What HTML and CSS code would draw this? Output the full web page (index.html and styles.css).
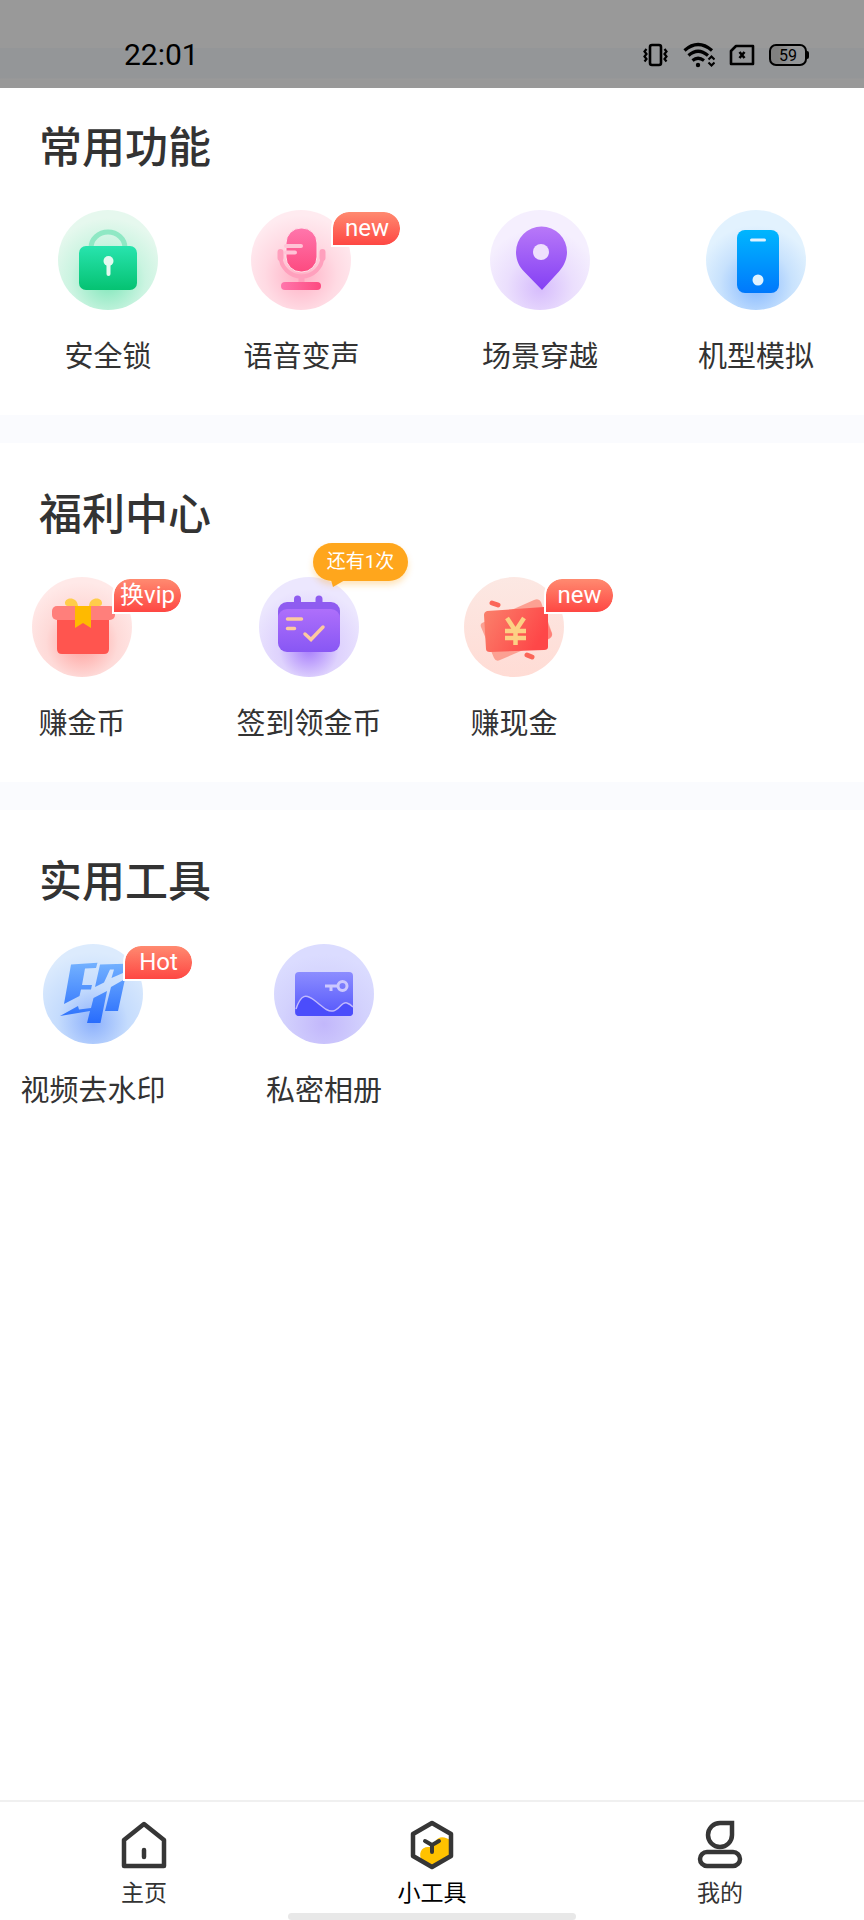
FILE: index.html
```html
<!DOCTYPE html>
<html lang="zh-CN">
<head>
  <meta charset="UTF-8" />
  <meta name="viewport" content="width=device-width, initial-scale=1.0" />
  <title>小工具</title>
  <link rel="stylesheet" href="styles.css">
</head>
<body>
  <div class="app">
    <header class="status-bar">
      <span class="time">22:01</span>
      <div class="status-icons">
        <svg width="26" height="24" viewBox="0 0 26 24" fill="none" stroke="#000" stroke-width="2.600">
          <rect x="7" y="2" width="11" height="20" rx="2" />
          <path d="M3.500 6l-2 2.500 2 2.500-2 2.500 2 2.500-2 2.500M21.500 6l2 2.500-2 2.500 2 2.500-2 2.500 2 2.500" stroke-width="2.200" />
        </svg>
        <svg width="32" height="26" viewBox="0 0 32 26" fill="none" stroke="#000" stroke-width="3.200">
          <path d="M1.500 8.500Q15 -3.500 29 8.500M5.500 13.500Q15 5 25 13.500M9.500 18.500Q15 14 21 18.500" />
          <circle cx="15" cy="23" r="2.200" fill="#000" stroke="none" />
          <path d="M25.500 17.500l3-3 3 3M25.500 20.500l3 3 3-3" stroke-width="2.200" />
        </svg>
        <svg width="26" height="22" viewBox="0 0 26 22" fill="none" stroke="#000" stroke-width="2.600">
          <path d="M7 2h17v18H2V7z" stroke-linejoin="round" />
          <path d="M10.500 8l5 6M15.500 8l-5 6" />
        </svg>
        <div class="battery">59</div>
      </div>
    </header>

    <main class="content">
      <section class="group">
        <h2>常用功能</h2>
        <div class="tools">
          <a class="tool" href="#">
            <span class="icon">
              <svg viewBox="0 0 100 100">
                <defs>
                  <radialGradient id="lockBg" cx=".5" cy=".7" r=".62"><stop offset="0" stop-color="#7ce6b8" /><stop offset=".6" stop-color="#cbf4e1" /><stop offset="1" stop-color="#e6f8ee" /></radialGradient>
                  <linearGradient id="lockFill" x2="0" y2="1"><stop stop-color="#28e4ae" /><stop offset="1" stop-color="#05c272" /></linearGradient>
                </defs>
                <circle cx="50" cy="50" r="50" fill="url(#lockBg)" />
                <path d="M33 40v-2a17 16 0 0 1 34 0v2" fill="none" stroke="#8fe8c4" stroke-width="5" />
                <rect x="21" y="36" width="58" height="44" rx="7" fill="url(#lockFill)" />
                <circle cx="50.500" cy="51" r="5" fill="#e4faf0" />
                <path d="M50.500 52v12" stroke="#e4faf0" stroke-width="4" stroke-linecap="round" />
              </svg>
            </span>
            <span class="label">安全锁</span>
          </a>
          <a class="tool room-md" href="#">
            <span class="icon">
              <svg viewBox="0 0 100 100">
                <defs>
                  <radialGradient id="micBg" cx=".5" cy=".65" r=".6"><stop offset="0" stop-color="#ffafc4" /><stop offset=".6" stop-color="#ffdae3" /><stop offset="1" stop-color="#ffebf0" /></radialGradient>
                  <linearGradient id="micFill" x2="0" y2="1"><stop stop-color="#ff76ac" /><stop offset="1" stop-color="#fd4a80" /></linearGradient>
                  <linearGradient id="micBase"><stop stop-color="#ff76ac" /><stop offset="1" stop-color="#fd4a80" /></linearGradient>
                </defs>
                <circle cx="50" cy="50" r="50" fill="url(#micBg)" />
                <path d="M29.500 46a21 20.500 0 0 0 42 0" fill="none" stroke="#ffa0bd" stroke-width="4" />
                <path d="M29.500 42v6M71.500 42v6" stroke="#ffa0bd" stroke-width="6" stroke-linecap="round" />
                <path d="M50.500 66v8" stroke="#ffa0bd" stroke-width="6" />
                <rect x="35" y="18" width="31" height="44" rx="15" fill="url(#micFill)" stroke="#ffe0e9" />
                <path d="M35 36h15M35 42.500h9" stroke="#ffc3d6" stroke-width="4" stroke-linecap="round" />
                <rect x="30" y="72" width="40" height="8" rx="4" fill="url(#micBase)" />
              </svg>
              <span class="badge">new</span>
            </span>
            <span class="label">语音变声</span>
          </a>
          <a class="tool" href="#">
            <span class="icon">
              <svg viewBox="0 0 100 100">
                <defs>
                  <radialGradient id="pinBg" cx=".5" cy=".78" r=".6"><stop offset="0" stop-color="#d6bcfc" /><stop offset=".55" stop-color="#ebdffd" /><stop offset="1" stop-color="#f5effe" /></radialGradient>
                  <linearGradient id="pinFill" x2="0" y2="1"><stop stop-color="#b878f8" /><stop offset="1" stop-color="#8440f4" /></linearGradient>
                </defs>
                <circle cx="50" cy="50" r="50" fill="url(#pinBg)" />
                <path d="M52 80L34 61.500C28.500 56 26 49 26 42a25.500 25.500 0 0 1 51 0c0 7-3 14-8 19.500z" fill="url(#pinFill)" />
                <circle cx="51" cy="42" r="8" fill="#efdffd" />
              </svg>
            </span>
            <span class="label">场景穿越</span>
          </a>
          <a class="tool" href="#">
            <span class="icon">
              <svg viewBox="0 0 100 100">
                <defs>
                  <radialGradient id="phoneBg" cx=".5" cy=".75" r=".6"><stop offset="0" stop-color="#86b8ff" /><stop offset=".6" stop-color="#c8e2fd" /><stop offset="1" stop-color="#e2f2fe" /></radialGradient>
                  <linearGradient id="phoneFill" x2="0" y2="1"><stop stop-color="#00b6fe" /><stop offset="1" stop-color="#0078fc" /></linearGradient>
                </defs>
                <circle cx="50" cy="50" r="50" fill="url(#phoneBg)" />
                <rect x="31" y="20" width="42" height="63" rx="8" fill="url(#phoneFill)" />
                <path d="M45.500 30h13" stroke="#e0f2ff" stroke-width="3" stroke-linecap="round" />
                <circle cx="52" cy="70" r="5.500" fill="#e0f2ff" />
              </svg>
            </span>
            <span class="label">机型模拟</span>
          </a>
        </div>
      </section>

      <section class="group">
        <h2>福利中心</h2>
        <div class="tools">
          <a class="tool room-lg" href="#">
            <span class="icon">
              <svg viewBox="0 0 100 100">
                <defs>
                  <radialGradient id="giftBg" cx=".5" cy=".65" r=".6"><stop offset="0" stop-color="#ff9c98" /><stop offset=".6" stop-color="#fedad8" /><stop offset="1" stop-color="#ffe9e8" /></radialGradient>
                </defs>
                <circle cx="50" cy="50" r="50" fill="url(#giftBg)" />
                <path d="M25 40h52v32q0 5-5 5H30q-5 0-5-5z" fill="#ff554f" />
                <rect x="20" y="29" width="63" height="14" rx="5" fill="#ff7f7b" />
                <path d="M46 29c-1-10-13-9-13-3q0 3 3 3zM57 29c1-10 13-9 13-3q0 3-3 3z" fill="#ffcd4a" />
                <path d="M43 29h16v22l-8-5-8 5z" fill="#ffba00" />
              </svg>
              <span class="badge">换vip</span>
            </span>
            <span class="label">赚金币</span>
          </a>
          <a class="tool room-sm" href="#">
            <span class="icon">
              <svg viewBox="0 0 100 100">
                <defs>
                  <radialGradient id="calBg" cx=".5" cy=".72" r=".6"><stop offset="0" stop-color="#a77dfb" /><stop offset=".5" stop-color="#ded2fd" /><stop offset="1" stop-color="#ece7fe" /></radialGradient>
                  <linearGradient id="calFill" x2="0" y2="1"><stop stop-color="#ae6ffb" /><stop offset="1" stop-color="#8857f4" /></linearGradient>
                </defs>
                <circle cx="50" cy="50" r="50" fill="url(#calBg)" />
                <rect x="19" y="25" width="62" height="45" rx="9" fill="#8f5cf0" />
                <rect x="19" y="32" width="62" height="43" rx="9" fill="url(#calFill)" />
                <path d="M38.500 22v6M60 22v6" stroke="#8f5cf0" stroke-width="7" stroke-linecap="round" />
                <path d="M28.500 42h14M28.500 51.500h7M46 57l6 5.500L64 50" fill="none" stroke="#fdc9a0" stroke-width="3.500" stroke-linecap="round" />
              </svg>
              <span class="bubble">还有1次</span>
            </span>
            <span class="label">签到领金币</span>
          </a>
          <a class="tool room-lg" href="#">
            <span class="icon">
              <svg viewBox="0 0 100 100">
                <defs>
                  <linearGradient id="cashBg" x2="0" y2="1"><stop stop-color="#fce8e3" /><stop offset="1" stop-color="#ffdcd5" /></linearGradient>
                  <linearGradient id="cashFill" x2="1" y2=".4"><stop stop-color="#fa826c" /><stop offset="1" stop-color="#fe4748" /></linearGradient>
                </defs>
                <circle cx="50" cy="50" r="50" fill="url(#cashBg)" />
                <path d="M18 46L70 23q5-2 7 2l11 31q1 4-3 6L36 83q-4 2-6-2L17 50q-1-3 1-4z" fill="#fca092" />
                <path d="M83 45l5 12q0 3-4 5z" fill="#ff8078" />
                <path d="M23 34l57-4q4 0 4 4v36q0 3-4 3l-54 2q-4 0-4-3l-2-34q0-3 3-4z" fill="url(#cashFill)" />
                <path d="M43 41l8.500 13L60 41M51.500 54v14M41 54h21M41 61h21" fill="none" stroke="#fcd184" stroke-width="4.500" />
                <path d="M28 26l6 2M63 78l5 2" stroke="#fb6658" stroke-width="5" stroke-linecap="round" />
              </svg>
              <span class="badge">new</span>
            </span>
            <span class="label">赚现金</span>
          </a>
        </div>
      </section>

      <section class="group">
        <h2>实用工具</h2>
        <div class="tools">
          <a class="tool room-sm" href="#">
            <span class="icon">
              <svg viewBox="0 0 100 100">
                <defs>
                  <radialGradient id="markBg" cx=".5" cy=".78" r=".7"><stop offset="0" stop-color="#8cb0fc" /><stop offset=".5" stop-color="#c5dcfd" /><stop offset="1" stop-color="#dcebfd" /></radialGradient>
                  <linearGradient id="markFill" gradientUnits="userSpaceOnUse" x1="0" y1="18" x2="0" y2="79"><stop stop-color="#74b2ff" /><stop offset="1" stop-color="#286cfc" /></linearGradient>
                </defs>
                <circle cx="50" cy="50" r="50" fill="url(#markBg)" />
                <path d="M28 20.500L54.500 18.700 53 24 42 24.500 39 41H49L48 45.500H38L36.500 52 21 60zM57 20.500L82 19.700 80 29 68.500 34 71 25.500H67L61 38.500 52 43zM82 35L75 67H62L68 43zM50.500 54L64 47 57.500 79H44L47 67 17 72 35 62 36 65.500 48 64z" fill="url(#markFill)" />
              </svg>
              <span class="badge">Hot</span>
            </span>
            <span class="label">视频去水印</span>
          </a>
          <a class="tool" href="#">
            <span class="icon">
              <svg viewBox="0 0 100 100">
                <defs>
                  <radialGradient id="albumBg" cx=".5" cy=".8" r=".7"><stop offset="0" stop-color="#c2b7fb" /><stop offset=".6" stop-color="#d3d2fd" /><stop offset="1" stop-color="#dbdcff" /></radialGradient>
                  <linearGradient id="albumFill" x2="0" y2="1"><stop stop-color="#8c8dff" /><stop offset="1" stop-color="#5557fb" /></linearGradient>
                </defs>
                <circle cx="50" cy="50" r="50" fill="url(#albumBg)" />
                <rect x="21" y="28" width="58" height="44" rx="4" fill="url(#albumFill)" />
                <path d="M22 65C27 50 32 50 40 56S53 68 59 67s9-10 14-8q3 1 6 4v5q0 4-4 4H25q-4 0-3-7z" fill="#4b4dfb" />
                <path d="M22 65C27 50 32 50 40 56S53 68 59 67s9-10 14-8q3 1 6 4" fill="none" stroke="#c0b8fd" stroke-width="1.500" />
                <circle cx="68.500" cy="42" r="4.500" fill="none" stroke="#cdc8fe" stroke-width="3" />
                <path d="M64 42H51M57 42v5" fill="none" stroke="#cdc8fe" stroke-width="3" />
              </svg>
            </span>
            <span class="label">私密相册</span>
          </a>
        </div>
      </section>
    </main>

    <nav class="tab-bar">
      <a class="tab" href="#">
        <svg width="48" height="50" viewBox="0 0 48 50" fill="none" stroke="#363636" stroke-width="4.500" stroke-linejoin="round" stroke-linecap="round">
          <path d="M4 20L24 4l20 16v26H4z" />
          <path d="M24 30v7" />
        </svg>
        主页
      </a>
      <a class="tab active" href="#">
        <svg width="48" height="50" viewBox="0 0 48 50" fill="none" stroke="#363636" stroke-width="4.500" stroke-linejoin="round" stroke-linecap="round">
          <path d="M24 47l-10-6c-4-7-1-14 6-14 3 0 5-1 7-5 3-6 10-6 16-1v15z" fill="#ffc200" stroke="none" />
          <path d="M24 3l19 11v22L24 47 5 36V14z" />
          <path d="M17 21l7 4 7-4M24 25v7" stroke-width="4" />
        </svg>
        小工具
      </a>
      <a class="tab" href="#">
        <svg width="48" height="50" viewBox="0 0 48 50" fill="none" stroke="#363636" stroke-width="4.500">
          <path d="M24 3h12v12a12 12 0 1 1-12-12z" />
          <rect x="4" y="32" width="40" height="14" rx="7" />
        </svg>
        我的
      </a>
      <span class="home-indicator"></span>
    </nav>
  </div>
</body>
</html>
```
FILE: styles.css
```css
* {
  box-sizing: border-box;
}

body {
  margin: 0;
  font-family: Roboto, "Noto Sans CJK SC", sans-serif;
  color: #333;
  background-color: #fff;
}

a {
  color: inherit;
  text-decoration: none;
}

svg {
  display: block;
}

.app {
  display: flex;
  flex-direction: column;
  min-height: 100vh;
}

/* status bar */
.status-bar {
  display: flex;
  justify-content: space-between;
  align-items: center;
  height: 88px;
  padding: 22px 57px 0 124px;
  background: linear-gradient(#999 0 54%, #949698 55% 88%, #999 90%);
  color: #000;
}

.time {
  font-size: 30px;
  line-height: 40px;
}

.status-icons {
  display: flex;
  align-items: center;
  gap: 14px;
}

.battery {
  position: relative;
  width: 38px;
  height: 22px;
  border: 2px solid #000;
  border-radius: 7px;
  background: linear-gradient(to right, #808080 20%, transparent 60%);
  font-size: 16px;
  line-height: 19px;
  text-align: center;
}

.battery::after {
  content: "";
  position: absolute;
  right: -4px;
  top: 5px;
  width: 3px;
  height: 8px;
  border-radius: 0 2px 2px 0;
  background-color: #000;
}

/* tool groups */
.content {
  flex: 1;
}

.group {
  padding: 40px 0 38px;
}

.group:first-child {
  padding-top: 28px;
}

.group + .group {
  border-top: 28px solid #fafbfe;
}

.group h2 {
  margin: 0 0 30px;
  padding-left: 39px;
  font-size: 43px;
  font-weight: 500;
  line-height: 64px;
}

.tools {
  display: grid;
  grid-template-columns: repeat(4, 1fr);
  justify-items: center;
}

.tool {
  display: flex;
  flex-direction: column;
  align-items: center;
  gap: 27px;
}

/* keeps the badge inside the centred item */
.room-sm {
  padding-right: 30px;
}

.room-md {
  padding-right: 45px;
}

.room-lg {
  padding-right: 52px;
}

.icon {
  position: relative;
  width: 100px;
  height: 100px;
}

.label {
  font-size: 29px;
  line-height: 40px;
  white-space: nowrap;
}

.badge {
  position: absolute;
  left: 80px;
  top: 0;
  width: 71px;
  height: 37px;
  border: 2px solid #fff;
  border-radius: 18px 18px 18px 0;
  background: linear-gradient(#ff8a70, #fe4743) padding-box;
  color: #fff;
  font-size: 24px;
  line-height: 33px;
  text-align: center;
  white-space: nowrap;
}

.bubble {
  position: absolute;
  left: 54px;
  top: -34px;
  width: 95px;
  height: 38px;
  border-radius: 19px;
  background-color: #ffa61c;
  box-shadow: 0 4px 6px rgba(255, 166, 28, 0.3);
  color: #fff;
  font-size: 19px;
  line-height: 38px;
  text-align: center;
  white-space: nowrap;
}

.bubble::after {
  content: "";
  position: absolute;
  left: 18px;
  bottom: -6px;
  border-left: 2px solid transparent;
  border-right: 12px solid transparent;
  border-top: 7px solid #ffa61c;
}

/* bottom tabs */
.tab-bar {
  position: relative;
  display: grid;
  grid-template-columns: repeat(3, 1fr);
  height: 120px;
  padding-top: 18px;
  border-top: 2px solid #f0f0f0;
}

.tab {
  display: flex;
  flex-direction: column;
  align-items: center;
  gap: 8px;
  font-size: 23px;
  line-height: 32px;
}

.tab.active {
  color: #000;
}

.home-indicator {
  position: absolute;
  left: 33.333%;
  right: 33.333%;
  bottom: 0;
  height: 7px;
  border-radius: 4px;
  background-color: #e8e8e8;
}
```
